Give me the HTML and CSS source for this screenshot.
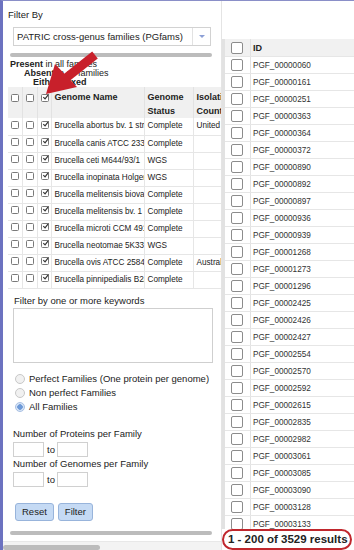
FILE: index.html
```html
<!DOCTYPE html>
<html lang="en">
<head>
    <meta charset="UTF-8">
    <title>Protein Families</title>
    <link rel="stylesheet" href="styles.css">
</head>
<body>

    <div class="left">
        <div class="filter-title">Filter By</div>
        <div class="select">
            <span class="select-text">PATRIC cross-genus families (PGfams)</span>
            <span class="select-arrow"><span class="tri"></span></span>
        </div>
        <div class="hscroll"><div class="thumb"></div></div>

        <div class="legend">
            <div class="l1"><b>Present</b> in all families</div>
            <div class="l2"><b>Absent</b> in all families</div>
            <div class="l3"><b>Either/Mixed</b></div>
        </div>

        <div class="genome-wrap">
            <table class="genomes">
                <colgroup>
                    <col class="c-cb"><col class="c-cb2"><col class="c-cb">
                    <col class="c-name"><col class="c-status"><col class="c-country">
                </colgroup>
                <thead>
                    <tr>
                        <th><span class="cb"></span></th>
                        <th><span class="cb"></span></th>
                        <th><span class="cb checked"><svg viewBox="0 0 8 8"><path d="M1.5 3.5 L3.5 5.5 L7.5 0.5" /></svg></span></th>
                        <th>Genome Name</th>
                        <th>Genome Status</th>
                        <th>Isolation Country</th>
                    </tr>
                </thead>
                <tbody id="genome-rows"></tbody>
            </table>
        </div>

        <div class="kw-label">Filter by one or more keywords</div>
        <div class="keywords"></div>

        <div class="radios">
            <div class="radio-row"><span class="radio"></span>Perfect Families (One protein per genome)</div>
            <div class="radio-row"><span class="radio"></span>Non perfect Families</div>
            <div class="radio-row"><span class="radio on"></span>All Families</div>
        </div>

        <div class="num-label">Number of Proteins per Family</div>
        <div class="range"><span class="num-box"></span><span class="to">to</span><span class="num-box"></span></div>
        <div class="num-label tight">Number of Genomes per Family</div>
        <div class="range"><span class="num-box"></span><span class="to">to</span><span class="num-box"></span></div>

        <div class="buttons">
            <button class="btn">Reset</button>
            <button class="btn">Filter</button>
        </div>

        <div class="hscroll bottom"><div class="thumb"></div></div>
        <div class="page-scroll"><div class="thumb"></div></div>
    </div>

    <div class="right">
        <div class="grid">
            <div class="grid-head">
                <div class="gcol"><span class="gcb"></span></div>
                <div class="gid">ID</div>
            </div>
            <div id="grid-rows"></div>
        </div>
        <div class="results">1 - 200 of 3529 results</div>
    </div>

    <!-- red annotation arrow -->
    <svg class="arrow" width="354" height="550" viewBox="0 0 354 550">
        <line x1="95" y1="55" x2="66" y2="78" stroke="#c8202b" stroke-width="9" />
        <polygon points="46,94 55,64 77,87" fill="#c8202b" />
    </svg>

    <script>
        const genomes = [
            ['Brucella abortus bv. 1 str. 9-941', 'Complete', 'United States'],
            ['Brucella canis ATCC 23365', 'Complete', ''],
            ['Brucella ceti M644/93/1', 'WGS', ''],
            ['Brucella inopinata Holger', 'WGS', ''],
            ['Brucella melitensis biovar Abortus', 'Complete', ''],
            ['Brucella melitensis bv. 1 str. 16M', 'Complete', ''],
            ['Brucella microti CCM 4915', 'Complete', ''],
            ['Brucella neotomae 5K33', 'WGS', ''],
            ['Brucella ovis ATCC 25840', 'Complete', 'Australia'],
            ['Brucella pinnipedialis B2/94', 'Complete', '']
        ];

        const check = '<span class="cb checked"><svg viewBox="0 0 8 8"><path d="M1.5 3.5 L3.5 5.5 L7.5 0.5" /></svg></span>';
        document.getElementById('genome-rows').innerHTML = genomes.map(g => `
            <tr>
                <td><span class="cb"></span></td>
                <td><span class="cb"></span></td>
                <td>${check}</td>
                <td>${g[0]}</td>
                <td>${g[1]}</td>
                <td>${g[2]}</td>
            </tr>`).join('');

        const ids = ['00000060', '00000161', '00000251', '00000363', '00000364', '00000372',
            '00000890', '00000892', '00000897', '00000936', '00000939', '00001268', '00001273',
            '00001296', '00002425', '00002426', '00002427', '00002554', '00002570', '00002592',
            '00002615', '00002835', '00002982', '00003061', '00003085', '00003090', '00003128',
            '00003133'];

        document.getElementById('grid-rows').innerHTML = ids.map(id => `
            <div class="grow">
                <div class="gcol"><span class="gcb"></span></div>
                <div class="gid">PGF_${id}</div>
            </div>`).join('');
    </script>

</body>
</html>
```

FILE: styles.css
```css
* {
    margin: 0;
    padding: 0;
    box-sizing: border-box;
}

body {
    font-family: 'Liberation Sans', Arial, sans-serif;
    color: #222;
    background: #fff;
    height: 550px;
    overflow: hidden;
    display: flex;
    border-left: 3px solid #6c72c0;
    border-top: 1px solid #8a8fc8;
}

/* Left filter panel */
.left {
    width: 219px;
    flex: none;
    padding-left: 5px;
    overflow: hidden;
    border-right: 1px solid #e4e4e4;
}

.filter-title {
    font-size: 9.5px;
    line-height: 14px;
    margin-top: 7px;
}

.select {
    display: flex;
    height: 19px;
    width: 198px;
    margin: 5px 0 0 5px;
    border: 1px solid #d2d2d2;
    background: #fff;
}

.select-text {
    flex: 1;
    font-size: 9.5px;
    line-height: 17px;
    padding-left: 3px;
    white-space: nowrap;
    overflow: hidden;
}

.select-arrow {
    width: 18px;
    border-left: 1px solid #e2e2e2;
    display: flex;
    align-items: center;
    justify-content: center;
}

.tri {
    width: 0;
    height: 0;
    border-left: 3px solid transparent;
    border-right: 3px solid transparent;
    border-top: 3px solid #8c9fd6;
}

.hscroll {
    width: 202px;
    margin: 7px 0 0 2px;
}

.hscroll .thumb {
    height: 4px;
    background: #bcbcbc;
    border-radius: 3px;
}

.legend {
    margin-top: 3px;
    font-size: 9px;
    line-height: 9px;
    white-space: nowrap;
}

.legend .l1 { padding-left: 2px; }
.legend .l2 { padding-left: 16px; }
.legend .l3 { padding-left: 25px; }

/* Genome table */
.genome-wrap {
    width: 213px;
    overflow: hidden;
}

.genomes {
    width: 245px;
    table-layout: fixed;
    border-collapse: collapse;
    font-size: 8.2px;
}

.c-cb { width: 14px; }
.c-cb2 { width: 15px; }
.c-name { width: 93px; }
.c-status { width: 49px; }
.c-country { width: 60px; }

.genomes th {
    background: #f0f0f0;
    font-size: 9px;
    font-weight: bold;
    text-align: left;
    vertical-align: top;
    line-height: 14px;
    height: 31px;
    padding: 3px 2px 0 3px;
    border-right: 1px solid #e2e2e2;
    overflow: hidden;
    white-space: normal;
}

.genomes th:nth-child(-n+3) {
    padding: 4px 0 0 3px;
}

.genomes th:nth-child(4) {
    white-space: nowrap;
}

.genomes td {
    height: 17px;
    padding: 0 2px 0 3px;
    border-right: 1px solid #e6e6e6;
    border-bottom: 1px solid #e6e6e6;
    white-space: nowrap;
    overflow: hidden;
    text-overflow: clip;
    line-height: 16px;
}

.genomes td:nth-child(-n+3) {
    padding: 0 0 0 3px;
}

.cb {
    display: inline-block;
    width: 8px;
    height: 8px;
    border: 1px solid #7a7a7a;
    border-radius: 1.5px;
    background: #fff;
    vertical-align: middle;
    position: relative;
    top: -1px;
}

.cb svg {
    display: block;
    width: 7px;
    height: 7px;
    margin: -1px 0 0 0;
}

.cb svg path {
    fill: none;
    stroke: #333;
    stroke-width: 1.4;
}

/* Keyword filter */
.kw-label {
    font-size: 9.5px;
    line-height: 14px;
    margin: 5px 0 0 6px;
}

.keywords {
    width: 200px;
    height: 55px;
    margin-left: 5px;
    border: 1px solid #cfcfcf;
    background: #fff;
}

.radios {
    margin: 9px 0 0 7px;
    font-size: 9.5px;
}

.radio-row {
    display: flex;
    align-items: center;
    height: 14px;
    white-space: nowrap;
}

.radio {
    flex: none;
    width: 10px;
    height: 10px;
    border-radius: 50%;
    border: 1px solid #c8c8c8;
    background: #f1f1f1;
    margin-right: 4px;
}

.radio.on {
    border-color: #a9c0e3;
    background: radial-gradient(circle, #6e9ad8 0 2.5px, #d6e4f6 3px);
}

.num-label {
    font-size: 9.5px;
    line-height: 14px;
    margin: 13px 0 0 5px;
}

.num-label.tight {
    margin-top: 0;
}

.range {
    display: flex;
    align-items: center;
    margin: 1px 0 0 5px;
    font-size: 9.5px;
}

.num-box {
    width: 31px;
    height: 15px;
    border: 1px solid #d0d0d0;
    background: #fff;
}

.to {
    width: 13px;
    padding-left: 3px;
}

.buttons {
    display: flex;
    gap: 4px;
    margin: 16px 0 0 7px;
}

.btn {
    font-family: 'Liberation Sans', Arial, sans-serif;
    font-size: 9.5px;
    height: 18px;
    padding: 0 6px;
    color: #222;
    background: #c5daf4;
    border: 1px solid #98b4db;
    border-radius: 3px;
}

.hscroll.bottom {
    margin-top: 10px;
}

.page-scroll {
    margin: 6px 0 0 -5px;
    height: 10px;
    background: #f3f3f3;
    border-top: 1px solid #e8e8e8;
    padding-top: 3px;
}

.page-scroll .thumb {
    width: 97px;
    height: 5px;
    background: #bcbcbc;
    border-radius: 3px;
}

/* Right result grid */
.right {
    flex: 1;
    overflow: hidden;
}

.grid {
    margin-top: 38px;
    height: 490px;
    overflow: hidden;
    border-left: 3px solid #e2e2e2;
    font-size: 8.2px;
    color: #333;
}

.grid-head, .grow {
    display: flex;
    height: 17px;
    border-bottom: 1px solid #e6e6e6;
}

.grid-head {
    height: 18px;
    background: #f1f1f1;
    font-weight: bold;
    font-size: 9px;
    color: #222;
}

.gcol {
    width: 26px;
    border-right: 1px solid #e2e2e2;
    display: flex;
    align-items: center;
    padding-left: 6px;
}

.gcb {
    width: 12px;
    height: 12px;
    border: 1px solid #8c8c8c;
    border-radius: 2px;
    background: #fff;
}

.gid {
    padding-left: 2px;
    display: flex;
    align-items: center;
    white-space: nowrap;
}

.results {
    width: 130px;
    height: 21px;
    border: 2px solid #c0272d;
    border-radius: 11px;
    font-size: 11.5px;
    font-weight: bold;
    color: #222;
    line-height: 17px;
    padding-left: 4px;
    white-space: nowrap;
    background: #fff;
}

/* Annotation overlay */
.arrow {
    position: absolute;
    left: 0;
    top: 0;
    pointer-events: none;
}
```
